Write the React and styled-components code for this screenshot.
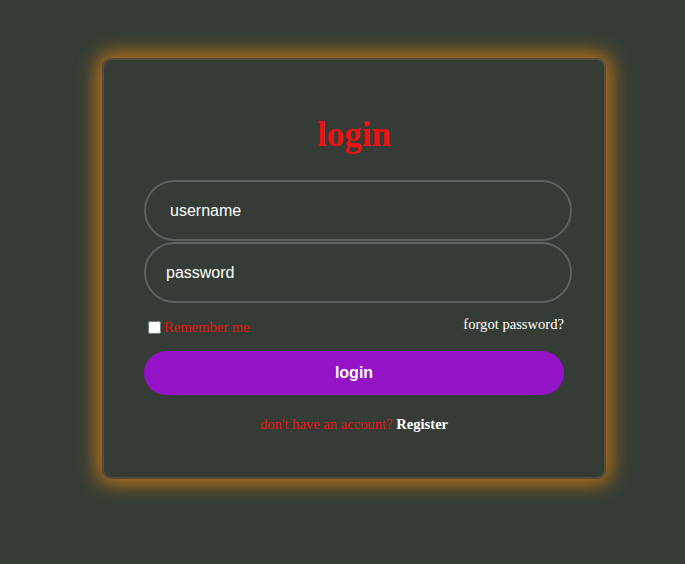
import React from 'react'
import styled, { createGlobalStyle } from 'styled-components'

const Global = createGlobalStyle`
  html, body {
    margin: 0;
    padding: 0;
    background: #343c35;
    height: 100%;
  }
`

const Page = styled.div`
  width: 685px;
  height: 564px;
  padding: 58px 0 0 102px;
  box-sizing: border-box;
`

const Card = styled.form`
  width: 504px;
  height: 421px;
  box-sizing: border-box;
  border: 2px solid #574a3e;
  border-radius: 10px;
  box-shadow: 0 0 20px 5px rgba(204, 122, 18, 0.9);
  padding: 55px 40px 0 40px;
  display: flex;
  flex-direction: column;
`

const Title = styled.h1`
  margin: 0 0 25px 0;
  text-align: center;
  color: #e81313;
  font-family: "Liberation Serif", serif;
  font-weight: 700;
  font-size: 35px;
  line-height: 40px;
`

const Input = styled.input`
  width: 428px;
  height: 61px;
  box-sizing: border-box;
  background: transparent;
  border: 2px solid #5c625d;
  border-radius: 31px;
  padding: 0 0 0 ${p => p.$indent}px;
  margin: 0 0 1px 0;
  color: #fff;
  font-family: "Liberation Sans", Arial, sans-serif;
  font-size: 16px;
  outline: none;
  &::placeholder {
    color: #fff;
  }
`

const Options = styled.div`
  display: flex;
  justify-content: space-between;
  align-items: flex-start;
  margin-top: 14px;
  font-family: "Liberation Serif", serif;
  font-size: 14.6px;
`

const Remember = styled.label`
  display: flex;
  align-items: center;
  color: #e81313;
  input {
    margin: 3px 3px 3px 4px;
    width: 13px;
    height: 13px;
  }
`

const Forgot = styled.a`
  color: #fff;
  margin-top: -2px;
  text-decoration: none;
`

const Button = styled.button`
  margin-top: 14px;
  width: 420px;
  height: 44px;
  border: none;
  border-radius: 22px;
  background: #9413c6;
  color: #fff;
  font-family: "Liberation Sans", Arial, sans-serif;
  font-weight: 700;
  font-size: 16px;
`

const Signup = styled.p`
  margin: 21px 0 0 0;
  text-align: center;
  color: #e81313;
  font-family: "Liberation Serif", serif;
  font-size: 14.6px;
  b {
    color: #fff;
  }
`

export default function App() {
  return (
    <Page>
      <Global />
      <Card onSubmit={e => e.preventDefault()}>
        <Title>login</Title>
        <Input placeholder="username" $indent={24} />
        <Input type="text" placeholder="password" $indent={20} />
        <Options>
          <Remember>
            <input type="checkbox" />
            Remember me
          </Remember>
          <Forgot href="#">forgot password?</Forgot>
        </Options>
        <Button type="submit">login</Button>
        <Signup>
          don't have an account? <b>Register</b>
        </Signup>
      </Card>
    </Page>
  )
}
